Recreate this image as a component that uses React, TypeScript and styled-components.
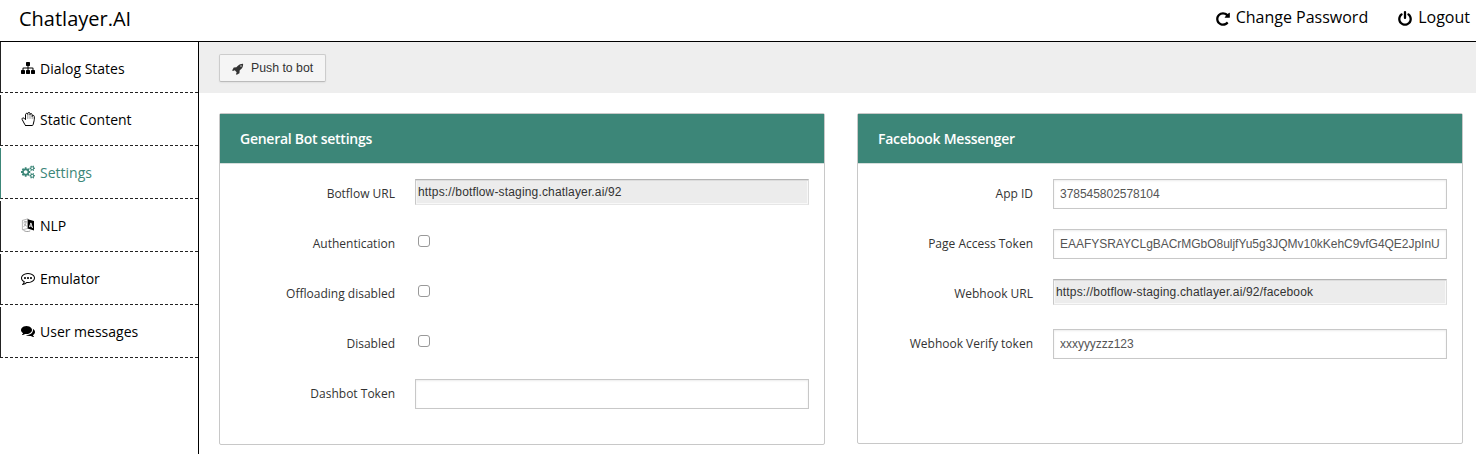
import React from "react";
import styled, { createGlobalStyle, css } from "styled-components";

const GlobalStyle = createGlobalStyle`
  *, *::before, *::after { box-sizing: border-box; }
  html, body { margin: 0; padding: 0; background: #fff; }
  body {
    font-family: "Open Sans", sans-serif;
    color: #333;
    overflow: hidden;
  }
`;

const Page = styled.div`
  display: flex;
  flex-direction: column;
  height: 100vh;
`;

const Header = styled.header`
  display: flex;
  justify-content: space-between;
  flex: none;
  height: 42px;
  padding: 0 6px 0 19px;
  border-bottom: 1px solid #000;
  color: #000;
`;

const Brand = styled.div`
  font-size: 20px;
  line-height: 38px;
`;

const Actions = styled.nav`
  display: flex;
  gap: 29px;
`;

const Action = styled.a`
  display: flex;
  align-items: center;
  height: 34px;
  gap: 5px;
  font-size: 16px;
  svg { margin-top: 4px; }
`;

const Body = styled.div`
  display: flex;
  flex: 1;
  min-height: 0;
`;

const Sidebar = styled.aside`
  display: flex;
  flex-direction: column;
  gap: 2px;
  flex: none;
  width: 199px;
  border-right: 1px solid #000;
`;

const NavItem = styled.a<{ $active?: boolean }>`
  display: flex;
  align-items: center;
  gap: 5px;
  height: 51px;
  padding: 0 0 2px 20px;
  border-left: 1px solid ${(p) => (p.$active ? "#3c8678" : "#222")};
  border-bottom: 1px dashed #222;
  color: ${(p) => (p.$active ? "#3c8678" : "#000")};
  font-size: 14px;
  &:first-child { padding-top: 2px; padding-bottom: 0; }
  svg { flex: none; }
`;

const Main = styled.main`
  flex: 1;
  min-width: 0;
`;

const Toolbar = styled.div`
  display: flex;
  height: 51px;
  padding: 12px 20px;
  background: #eee;
`;

const PushButton = styled.button`
  display: flex;
  align-items: center;
  gap: 7px;
  width: 107px;
  height: 28px;
  padding: 0 0 0 12px;
  border: 1px solid #ccc;
  border-bottom-color: #bbb;
  border-radius: 2px;
  background: #f5f5f5;
  box-shadow: 0 1px 2px rgba(0, 0, 0, 0.06);
  color: #333;
  font: 12.3px "Liberation Sans", Arial, sans-serif;
  svg { margin-top: 2px; }
`;

const Panels = styled.div`
  display: flex;
  align-items: flex-start;
  gap: 32px;
  padding: 20px;
`;

const Panel = styled.section<{ $height: number }>`
  flex: none;
  width: 606px;
  height: ${(p) => p.$height}px;
  border: 1px solid #c8c8c8;
  border-radius: 2px;
`;

const PanelTitle = styled.h2`
  margin: 0;
  height: 50px;
  padding-left: 20px;
  border-bottom: 1px solid #d5dedc;
  background: #3c8678;
  color: #fff;
  font-size: 14px;
  font-weight: 600;
  letter-spacing: -0.26px;
  line-height: 50px;
`;

const Fields = styled.div`
  display: flex;
  flex-direction: column;
  gap: 20px;
  padding: 15px 15px 0 0;
`;

const Field = styled.label`
  display: flex;
  align-items: flex-start;
  height: 30px;
`;

const FieldLabel = styled.span`
  width: 175px;
  margin-right: 20px;
  font-size: 12px;
  line-height: 29px;
  text-align: right;
`;

const inputBase = css`
  width: 394px;
  margin: 0;
  border-radius: 0;
  outline: 0;
  font: 12px "Liberation Sans", Arial, sans-serif;
`;

const TextInput = styled.input`
  ${inputBase}
  height: 30px;
  padding: 0 6px;
  border: 1px solid #c8c8c8;
  background: #fff;
  box-shadow: inset 0 1px 2px rgba(0, 0, 0, 0.08);
  color: #555;
  letter-spacing: -0.03px;
`;

const ReadonlyInput = styled.input`
  ${inputBase}
  height: 26px;
  padding: 0 2px 1px;
  border: 1px solid;
  border-color: #b4b4b4 #dcdcdc #e6e6e6 #c8c8c8;
  background: #ececec;
  box-shadow: inset 0 1px 0 #dcdcdc, inset 1px 0 0 #f6f6f6, inset -1px -1px 0 #f8f8f8;
  color: #333;
  letter-spacing: 0.16px;
`;

const Checkbox = styled.input`
  appearance: none;
  width: 12px;
  height: 12px;
  margin: 6px 0 0 3px;
  border: 1px solid #999;
  border-radius: 3px;
  background: #fff;
`;

const GLYPHS = {
  repeat:
    "M1664 256v448q0 26-19 45t-45 19h-448q-42 0-59-40-17-39 14-69l138-138q-148-137-349-137-104 0-198.5 40.5t-163.5 109.5-109.5 163.5-40.5 198.5 40.5 198.5 109.5 163.5 163.5 109.5 198.5 40.5q119 0 225-52t179-147q7-10 23-12 15 0 25 9l137 138q9 8 9.5 20.5t-7.5 22.5q-109 132-264 204.5t-327 72.5q-156 0-298-61t-245-164-164-245-61-298 61-298 164-245 245-164 298-61q147 0 284.5 55.5t244.5 156.5l130-129q29-31 70-14 39 17 39 59z",
  power:
    "M1664 896q0 156-61 298t-164 245-245 164-298 61-298-61-245-164-164-245-61-298q0-182 80.5-343t226.5-270q43-32 95.5-25t83.5 50q32 42 24.5 94.5t-49.5 84.5q-98 74-151.5 181t-53.5 228q0 104 40.5 198.5t109.5 163.5 163.5 109.5 198.5 40.5 198.5-40.5 163.5-109.5 109.5-163.5 40.5-198.5q0-121-53.5-228t-151.5-181q-42-32-49.5-84.5t24.5-94.5q31-43 84-50t95 25q146 109 226.5 270t80.5 343zm-640-768v640q0 52-38 90t-90 38-90-38-38-90v-640q0-52 38-90t90-38 90 38 38 90z",
  sitemap:
    "M1792 1248v320q0 40-28 68t-68 28h-320q-40 0-68-28t-28-68v-320q0-40 28-68t68-28h96v-192h-512v192h96q40 0 68 28t28 68v320q0 40-28 68t-68 28h-320q-40 0-68-28t-28-68v-320q0-40 28-68t68-28h96v-192h-512v192h96q40 0 68 28t28 68v320q0 40-28 68t-68 28h-320q-40 0-68-28t-28-68v-320q0-40 28-68t68-28h96v-192q0-52 38-90t90-38h512v-192h-96q-40 0-68-28t-28-68v-320q0-40 28-68t68-28h320q40 0 68 28t28 68v320q0 40-28 68t-68 28h-96v192h512q52 0 90 38t38 90v192h96q40 0 68 28t28 68z",
  comments:
    "M1408 768q0 139-94 257t-256.5 186.5-353.5 68.5q-86 0-176-16-124 88-278 128-36 9-86 16h-3q-11 0-20.5-8t-11.5-21q-1-3-1-6.5t.5-6.5 2-6l2.5-5 3.5-5.5 4-5 4.5-5 4-4.5q5-6 23-25t26-29.5 22.5-29 25-38.5 20.5-44q-124-72-195-177t-71-224q0-139 94-257t256.5-186.5 353.5-68.5 353.5 68.5 256.5 186.5 94 257zm384 256q0 120-71 224.5t-195 176.5q10 24 20.5 44t25 38.5 22.5 29 26 29.5 23 25q1 1 4 4.500t4.500 5 4 5 3.500 5.500l2.500 5 2 6 .5 6.500-1 6.500q-3 14-13 22t-22 7q-50-7-86-16-154-40-278-128-90 16-176 16-271 0-472-132 58 4 88 4 161 0 309-45t264-129q125-92 192-212t67-254q0-77-23-152 129 71 204 178t75 230z",
  rocket:
    "M1440 448q0-40-28-68t-68-28-68 28-28 68 28 68 68 28 68-28 28-68zm224-288q0 249-75.5 430.5t-253.5 360.5q-81 80-195 176l-20 379q-2 16-16 26l-384 224q-7 4-16 4-12 0-23-9l-64-64q-13-14-8-32l85-276-281-281-276 85q-3 1-9 1-14 0-23-9l-64-64q-17-19-5-39l224-384q10-14 26-16l379-20q96-114 176-195 188-187 358-258t431-71q14 0 24 9.5t10 22.5z",
  commenting:
    "M640 896q0 53-37.5 90.5t-90.5 37.5-90.5-37.5-37.5-90.5 37.5-90.5 90.5-37.5 90.5 37.5 37.5 90.5zm384 0q0 53-37.5 90.5t-90.5 37.5-90.5-37.5-37.5-90.5 37.5-90.5 90.5-37.5 90.5 37.5 37.5 90.5zm384 0q0 53-37.5 90.5t-90.5 37.5-90.5-37.5-37.5-90.5 37.5-90.5 90.5-37.5 90.5 37.5 37.5 90.5zm-512-512q-204 0-381.5 69.5t-282 187.5-104.5 255q0 112 71.5 213.5t201.5 175.5l87 50-27 96q-24 91-70 172 152-63 275-171l43-38 57 6q69 8 130 8 204 0 381.5-69.5t282-187.5 104.5-255-104.5-255-282-187.5-381.5-69.5zm896 512q0 174-120 321.5t-326 233-450 85.5q-70 0-145-8-198 175-460 242-49 14-114 22h-5q-15 0-27-10.5t-16-27.5v-1q-3-4-.5-12t2-10 4.5-9.5l6-9 7-8.5 8-9q7-8 31-34.5t34.5-38 31-39.5 32.5-51 27-59 26-76q-157-89-247.5-220t-90.5-281q0-174 120-321.5t326-233 450-85.5 450 85.5 326 233 120 321.5z",
};

const BIG_COG =
  "M896 896q0-106-75-181t-181-75-181 75-75 181 75 181 181 75 181-75 75-181zm384-91v185q0 10-7 19.5t-16 10.5l-155 24q-11 35-32 76 34 48 90 115 7 11 7 20 0 12-7 19-23 30-82.5 89.5t-78.5 59.5q-11 0-21-7l-115-90q-37 19-77 31-11 108-23 155-7 24-30 24h-186q-11 0-20-7.5t-10-17.5l-23-153q-34-10-75-31l-118 89q-7 7-20 7-11 0-21-8-144-133-144-160 0-9 7-19 10-14 41-53t47-61q-23-44-35-82l-152-24q-10-1-17-9.5t-7-19.5v-185q0-10 7-19.5t16-10.5l155-24q11-35 32-76-34-48-90-115-7-11-7-20 0-12 7-20 22-30 82-89t79-59q11 0 21 7l115 90q34-18 77-32 11-108 23-154 7-24 30-24h186q11 0 20 7.5t10 17.5l23 153q34 10 75 31l118-89q8-7 20-7 11 0 21 8 144 133 144 160 0 8-7 19-12 16-42 54t-45 60q23 48 34 82l152 23q10 2 17 10.5t7 19.5z";
const SMALL_COG =
  "M1664 1408q0-52-38-90t-90-38-90 38-38 90q0 53 37.5 90.5t90.5 37.5 90.5-37.5 37.5-90.5zm256-70v140q0 16-149 31-12 27-30 52 51 113 51 138 0 4-4 7-122 71-124 71-8 0-46-47t-52-68q-20 2-30 2t-30-2q-14 21-52 68t-46 47q-2 0-124-71-4-3-4-7 0-25 51-138-18-25-30-52-149-15-149-31v-140q0-16 149-31 13-29 30-52-51-113-51-138 0-4 4-7 4-2 35-20t59-34 30-16q8 0 46 46.5t52 67.5q20-2 30-2t30 2q51-71 92-112l6-2q4 0 124 70 4 3 4 7 0 25-51 138 17 23 30 52 149 15 149 31z";

function Glyph({ name, size }: { name: keyof typeof GLYPHS; size: number }) {
  return (
    <svg width={size} height={size} viewBox="0 0 1792 1792" fill="currentColor">
      <path d={GLYPHS[name]} />
    </svg>
  );
}

function CogsIcon() {
  return (
    <svg width="14" height="14" viewBox="0 0 1920 1792" fill="currentColor">
      <path d={BIG_COG} />
      <path d={SMALL_COG} />
      <path d={SMALL_COG} transform="translate(0 -1024)" />
    </svg>
  );
}

function HandIcon() {
  return (
    <svg width="14" height="14" viewBox="0 0 14 14" fill="none" stroke="currentColor" strokeLinecap="round" strokeLinejoin="round">
      <path
        strokeWidth="1"
        d="M4.700 13.500h6.500c.5 0 .8-.3.900-.8l1-4c.1-.4.2-.9.200-1.400V4.600c0-1.500-1.900-1.600-2.100-.2V2.800c0-1.600-2.200-1.600-2.200-.2V1.800C9-.1 6.800-.1 6.800 1.500v.8C6.600.9 4.500 1 4.500 2.700v5L3 6.200c-1-.9-2.500.2-1.800 1.400l2.700 5.100c.2.500.4.800.8.800z"
      />
      <path strokeWidth="0.6" strokeOpacity="0.7" d="M6.800 2.500v4M9 2.500v4M11.200 4.300v2.400" />
    </svg>
  );
}

function LanguageIcon() {
  return (
    <svg width="14" height="14" viewBox="0 0 14 14" fill="none">
      <path d="M1.400 2.400 7 .8v9.600l-5.600 1.400z" stroke="#888" strokeWidth="0.6" />
      <path d="M2.600 4.300 5.800 3.500M4 2.900v1.200M5.200 3.900C4.800 6 3.900 7.700 2.600 8.800M3 5.500c.7 1.300 1.700 2.300 2.900 2.700" stroke="#777" strokeWidth="0.6" />
      <path d="M6.700 1.200 13 3.100v9.400l-6.300-2z" fill="currentColor" />
      <path d="M8.400 9.100 9.900 4.900l1.600 5.100M8.900 7.800l2 .6" stroke="#fff" strokeWidth="0.9" />
      <path d="M2.500 12.400c2 1.300 4.500 1.500 6.700.5" stroke="#777" strokeWidth="0.7" />
    </svg>
  );
}

const NAV = [
  { label: "Dialog States", icon: <Glyph name="sitemap" size={14} /> },
  { label: "Static Content", icon: <HandIcon /> },
  { label: "Settings", icon: <CogsIcon />, active: true },
  { label: "NLP", icon: <LanguageIcon /> },
  { label: "Emulator", icon: <Glyph name="commenting" size={14} /> },
  { label: "User messages", icon: <Glyph name="comments" size={14} /> },
];

type FieldSpec = { label: string; kind: "text" | "readonly" | "checkbox"; value?: string };

const GENERAL: FieldSpec[] = [
  { label: "Botflow URL", kind: "readonly", value: "https://botflow-staging.chatlayer.ai/92" },
  { label: "Authentication", kind: "checkbox" },
  { label: "Offloading disabled", kind: "checkbox" },
  { label: "Disabled", kind: "checkbox" },
  { label: "Dashbot Token", kind: "text", value: "" },
];

const FACEBOOK: FieldSpec[] = [
  { label: "App ID", kind: "text", value: "378545802578104" },
  {
    label: "Page Access Token",
    kind: "text",
    value: "EAAFYSRAYCLgBACrMGbO8uljfYu5g3JQMv10kKehC9vfG4QE2JpInUT",
  },
  { label: "Webhook URL", kind: "readonly", value: "https://botflow-staging.chatlayer.ai/92/facebook" },
  { label: "Webhook Verify token", kind: "text", value: "xxxyyyzzz123" },
];

function SettingsPanel({ title, fields, height }: { title: string; fields: FieldSpec[]; height: number }) {
  return (
    <Panel $height={height}>
      <PanelTitle>{title}</PanelTitle>
      <Fields>
        {fields.map((f) => (
          <Field key={f.label}>
            <FieldLabel>{f.label}</FieldLabel>
            {f.kind === "text" && <TextInput defaultValue={f.value} spellCheck={false} />}
            {f.kind === "readonly" && <ReadonlyInput readOnly value={f.value} />}
            {f.kind === "checkbox" && <Checkbox type="checkbox" />}
          </Field>
        ))}
      </Fields>
    </Panel>
  );
}

export default function App() {
  return (
    <Page>
      <GlobalStyle />
      <Header>
        <Brand>Chatlayer.AI</Brand>
        <Actions>
          <Action>
            <Glyph name="repeat" size={16} />
            Change Password
          </Action>
          <Action>
            <Glyph name="power" size={16} />
            Logout
          </Action>
        </Actions>
      </Header>
      <Body>
        <Sidebar>
          {NAV.map((n) => (
            <NavItem key={n.label} $active={n.active}>
              {n.icon}
              {n.label}
            </NavItem>
          ))}
        </Sidebar>
        <Main>
          <Toolbar>
            <PushButton>
              <Glyph name="rocket" size={12} />
              Push to bot
            </PushButton>
          </Toolbar>
          <Panels>
            <SettingsPanel title="General Bot settings" fields={GENERAL} height={332} />
            <SettingsPanel title="Facebook Messenger" fields={FACEBOOK} height={331} />
          </Panels>
        </Main>
      </Body>
    </Page>
  );
}
